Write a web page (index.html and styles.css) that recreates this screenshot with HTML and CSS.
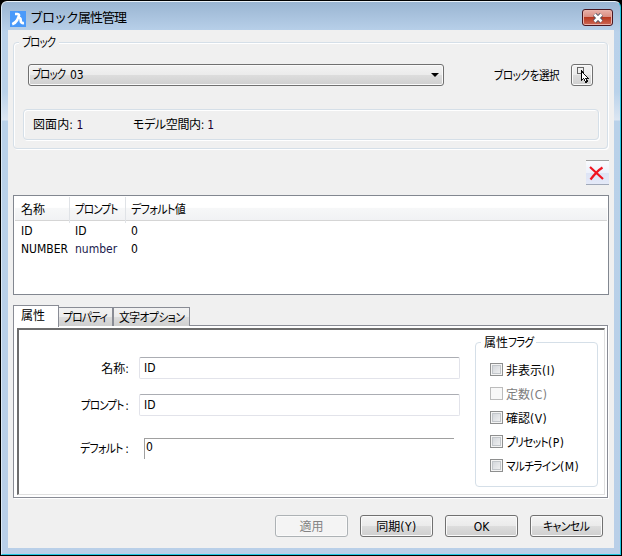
FILE: index.html
```
<!DOCTYPE html>
<html lang="ja">
<head>
<meta charset="utf-8">
<title>ブロック属性管理</title>
<link rel="stylesheet" href="styles.css">
</head>
<body>
<div class="window">
  <header class="titlebar">
    <svg class="logo" width="16" height="16" viewBox="0 0 16 16"><rect width="16" height="16" fill="#4a9afa"/><path d="M5 3H7.5Q9.6 3.2 8.8 5.2L7.2 9Q5.5 12 2.2 13.2M7.6 7.2Q10.8 6.2 10.7 9.2Q10.6 12.4 14 12" fill="none" stroke="#fff" stroke-width="2.7"/></svg>
    <h1>ブロック属性管理</h1>
    <button class="close" aria-label="閉じる"><svg width="12" height="10" viewBox="0 0 12 10"><path d="M2.5 1.5L9.5 8.5M9.5 1.5L2.5 8.5" stroke="#535666" stroke-width="4.4"/><path d="M2.5 1.5L9.5 8.5M9.5 1.5L2.5 8.5" stroke="#fff" stroke-width="2.5"/></svg></button>
  </header>
  <main class="client">
    <section class="group block-group">
      <h2 class="legend"><span class="kana block-word">ブロック</span></h2>
      <div class="select-row">
        <div class="combo"><span class="value"><span class="kana block-word">ブロック</span>03</span><svg width="8" height="4" viewBox="0 0 8 4"><path d="M0 0H8L4 4Z" fill="#000"/></svg></div>
        <span class="pick-label"><span class="kana pick-word">ブロックを選択</span></span>
        <button class="pick" aria-label="ブロックを選択"><svg width="20" height="20" viewBox="0 0 20 20" shape-rendering="crispEdges"><rect x="5.5" y="2.5" width="6" height="6" fill="none" stroke="#666"/><path d="M9.5 6V15.5L11.7 13.5L13.7 17.5L15.5 16.5L13.8 13H16Z" fill="#fff" stroke="#111"/><path d="M9 5h1v10H9z" fill="#000"/></svg></button>
      </div>
      <div class="group counts"><span class="count-a">図面内: <b>1</b></span><span class="count-b">モデル空間内: <b>1</b></span></div>
    </section>
    <div class="tools"><button class="delete" aria-label="削除"><svg width="16" height="16" viewBox="0 0 16 16"><path d="M1 2L14 14M13.5 2.5Q8 6 1.5 14.5" fill="none" stroke="#f01420" stroke-width="2.2"/></svg></button></div>
    <div class="list">
      <div class="row head"><span>名称</span><span><span class="kana prompt-word">プロンプト</span></span><span><span class="kana default-head">デフォルト値</span></span></div>
      <div class="row"><span>ID</span><span>ID</span><span>0</span></div>
      <div class="row"><span>NUMBER</span><span class="navy">number</span><span>0</span></div>
    </div>
    <nav class="tabs"><span class="tab active">属性</span><span class="tab props"><span class="kana props-word">プロパティ</span></span><span class="tab options"><span class="kana options-word">文字オプション</span></span></nav>
    <section class="panel">
      <div class="sheet">
        <div class="form">
          <div class="field"><label>名称:</label><div class="input">ID</div></div>
          <div class="field"><label><span class="kana prompt-word">プロンプト</span>:</label><div class="input">ID</div></div>
          <div class="field last"><label><span class="kana default-word">デフォルト</span>:</label><div class="plain">0</div></div>
        </div>
        <div class="group flags">
          <h2 class="legend">属性<span class="kana flag-word">フラグ</span></h2>
          <div class="check"><i></i><span>非表示<em>(I)</em></span></div>
          <div class="check disabled"><i></i><span>定数<em>(C)</em></span></div>
          <div class="check"><i></i><span>確認<em>(V)</em></span></div>
          <div class="check"><i></i><span><span class="kana preset">プリセット</span><em>(P)</em></span></div>
          <div class="check"><i></i><span><span class="kana multi">マルチライン</span><em>(M)</em></span></div>
        </div>
      </div>
    </section>
    <footer class="actions"><button class="btn disabled">適用</button><button class="btn">同期<em>(Y)</em></button><button class="btn">OK</button><button class="btn"><span class="kana cancel">キャンセル</span></button></footer>
  </main>
</div>
</body>
</html>
```
FILE: styles.css
```
* { box-sizing: border-box; }
body { margin: 0; background: #000; color: #000; overflow: hidden; font: 12px/16px "DejaVu Sans Condensed", "Noto Sans CJK JP", sans-serif; }
h1, h2 { margin: 0; font-weight: normal; }
button { padding: 0; font: inherit; color: inherit; }
b { font-weight: normal; color: #1b0033; }
em { font-style: normal; letter-spacing: .5px; }
/* Condensed kana: the box takes the drawn width, the glyphs are narrowed to fit it. */
.kana { display: inline-block; white-space: nowrap; text-align: left; font-feature-settings: "palt"; letter-spacing: -.9px; transform: scaleX(.86); transform-origin: 0 50%; }
.block-word { width: 34px; }
.value .block-word { width: 38px; }
.pick-word { width: 67px; letter-spacing: -.5px; transform: scaleX(.88); }
.prompt-word { width: 44px; letter-spacing: -.9px; transform: scaleX(.87); }
.default-word { width: 45px; letter-spacing: -.7px; transform: scaleX(.9); }
.default-head { letter-spacing: -.7px; transform: scaleX(.92); }
.props-word { letter-spacing: -.9px; transform: scaleX(.9); }
.options-word { letter-spacing: -.6px; transform: scaleX(.9); }
.flag-word { width: 25px; letter-spacing: -.9px; transform: scaleX(.88); }
.preset { width: 42px; letter-spacing: -.9px; transform: scaleX(.9); }
.multi { width: 54px; letter-spacing: -.6px; transform: scaleX(.88); }
.cancel { width: 48px; letter-spacing: -.6px; transform: scaleX(.9); }
.window { width: 620px; height: 554px; margin: 1px 0 0 1px; padding: 0 6px 6px; border: 1px solid #20c6df; border-top-color: #e9f1f8; border-left-color: #dce9f5; border-radius: 6px 6px 0 0; background: linear-gradient(#9ab5d2 0, #b9d1ea 30px, #bad2ea 90px, #dce6f2 118px, #b9d1e9 119px, #b9cfe8); }
.titlebar { display: flex; align-items: center; height: 28px; padding: 3px 1px 0 2px; }
.logo { margin-top: 2px; }
h1 { flex: 1; margin: 1px 0 0 4px; font-size: 13px; line-height: 18px; letter-spacing: -1px; }
.close { display: flex; align-items: center; justify-content: center; width: 31px; height: 17px; border: 1px solid #4b1720; border-radius: 3px; background: linear-gradient(#e9b1a9 0, #d98c81 47%, #b83820 50%, #cc6856); box-shadow: inset 0 0 0 1px #e9b2aa; }
.client { height: 518px; width: 606px; padding: 12px 5px 0; background: #f0f0f0; }
.group { border: 1px solid #d5dfe8; border-radius: 4px; box-shadow: inset 1px 1px #fff, 1px 1px #fff; }
.legend { width: max-content; height: 16px; padding: 0 3px; background: #f0f0f0; font-size: 12px; line-height: 16px; }
.block-group { height: 107px; width: 595px; padding: 0 9px; }
.block-group > .legend { margin: -8px 0 0 -4px; }
.select-row { display: flex; align-items: center; height: 24px; margin-top: 12px; padding-left: 5px; }
.combo, .pick, .btn { border: 1px solid #707070; border-radius: 3px; background: linear-gradient(#f3f3f3 0, #ebebeb 48%, #dddddd 50%, #cfcfcf); box-shadow: inset 0 0 0 1px #fafafa; }
.combo { display: flex; align-items: center; justify-content: space-between; width: 416px; height: 22px; padding: 0 4px 0 3px; }
.pick-label { width: 77px; margin: 2px 0 0 50px; white-space: nowrap; }
.pick { display: flex; width: 22px; height: 22px; }
.counts { display: flex; align-items: center; height: 31px; width: 576px; margin: 22px 0 0 0; padding: 0 9px; }
.count-a { width: 100px; letter-spacing: .1px; }
.count-b { font-feature-settings: "palt"; letter-spacing: -.35px; }
.tools { display: flex; justify-content: flex-end; height: 46px; padding-top: 11px; }
.delete { display: flex; align-items: center; justify-content: center; width: 23px; height: 25px; padding-right: 2px; border: 0; border-top: 1px solid #a0a0a0; border-bottom: 1px solid #a0a8b8; background: linear-gradient(#fafbfe, #edf1fb 50%, #dde4f5 52%, #e4e9f8); }
.list { width: 596px; height: 100px; border: 1px solid #828790; background: #fff; padding: 1px; }
.row { display: grid; grid-template-columns: 53px 56px 1fr; height: 18px; line-height: 18px; padding-left: 1px; }
.row > span { padding-left: 5px; white-space: nowrap; }
.row > span:nth-child(2) { padding-left: 6px; }
.row > span:nth-child(3) { padding-left: 6px; }
.head { height: 24px; margin-bottom: 1px; line-height: 26px; background: linear-gradient(#fff 0, #fff 45%, #f6f7f8 50%, #f1f2f4); border-bottom: 1px solid #d5d5d5; }
.head > span + span { border-left: 1px solid #e0e3e7; }
.head > span:nth-child(2), .head > span:nth-child(3) { padding-left: 5px; }
.navy { color: #1a1a4d; }
.tabs { display: flex; align-items: flex-end; height: 31px; }
.tab { height: 19px; border: 1px solid #898c95; border-bottom: 0; background: linear-gradient(#f2f2f2 0, #ebebeb 48%, #ddd 50%, #cfcfcf); line-height: 20px; padding-left: 4px; white-space: nowrap; }
.tab.active { position: relative; z-index: 1; width: 46px; height: 22px; margin-bottom: -1px; padding-left: 7px; background: #fff; }
.props { width: 54px; border-left: 0; }
.options { width: 77px; padding-left: 5px; }
.panel { width: 595px; height: 173px; margin-top: -1px; padding: 2px 2px 2px 3px; border: 1px solid #898c95; background: #fff; box-shadow: 1px 1px #fff; }
.sheet { display: flex; height: 167px; border: 1px solid #e0e0e0; border-top: 2px solid #6d6d6d; border-left: 2px solid #6d6d6d; }
.form { width: 456px; padding-top: 27px; }
.field { display: flex; align-items: center; height: 22px; margin-bottom: 15px; }
.field label { width: 110px; margin: 2px 10px 0 0; text-align: right; }
.input { width: 321px; height: 22px; padding: 2px 4px; border: 1px solid #e2e3ea; border-top-color: #abadb3; border-radius: 2px; }
.field.last { margin-top: 21px; }
.plain { width: 310px; height: 21px; margin-left: 5px; border-top: 1px solid #a0a0a0; border-left: 1px solid #a0a0a0; padding: 0 1px; }
.flags { width: 123px; height: 145px; margin-top: 12px; padding-left: 14px; }
.flags .legend { margin: -8px 0 12px -9px; background: #fff; }
.check { display: flex; align-items: center; height: 16px; margin-bottom: 8px; white-space: nowrap; }
.check i { width: 13px; height: 13px; margin: 0 3px 3px 0; border: 1px solid #8e8f8f; background: linear-gradient(135deg, #ccd0d5, #f6f6f6); box-shadow: inset 0 0 0 1px #f4f4f4, inset 0 0 0 2px #c2c6ca; }
.check.disabled { color: #7d7d7d; }
.check.disabled i { border-color: #bcbcbc; background: #f8f8f8; box-shadow: none; }
.actions { display: flex; justify-content: flex-end; gap: 12px; padding: 17px 6px 0 0; }
.btn { width: 73px; height: 22px; padding-top: 1px; }
.btn.disabled { color: #838383; border-color: #adb2b5; background: #f4f4f4; }
```
